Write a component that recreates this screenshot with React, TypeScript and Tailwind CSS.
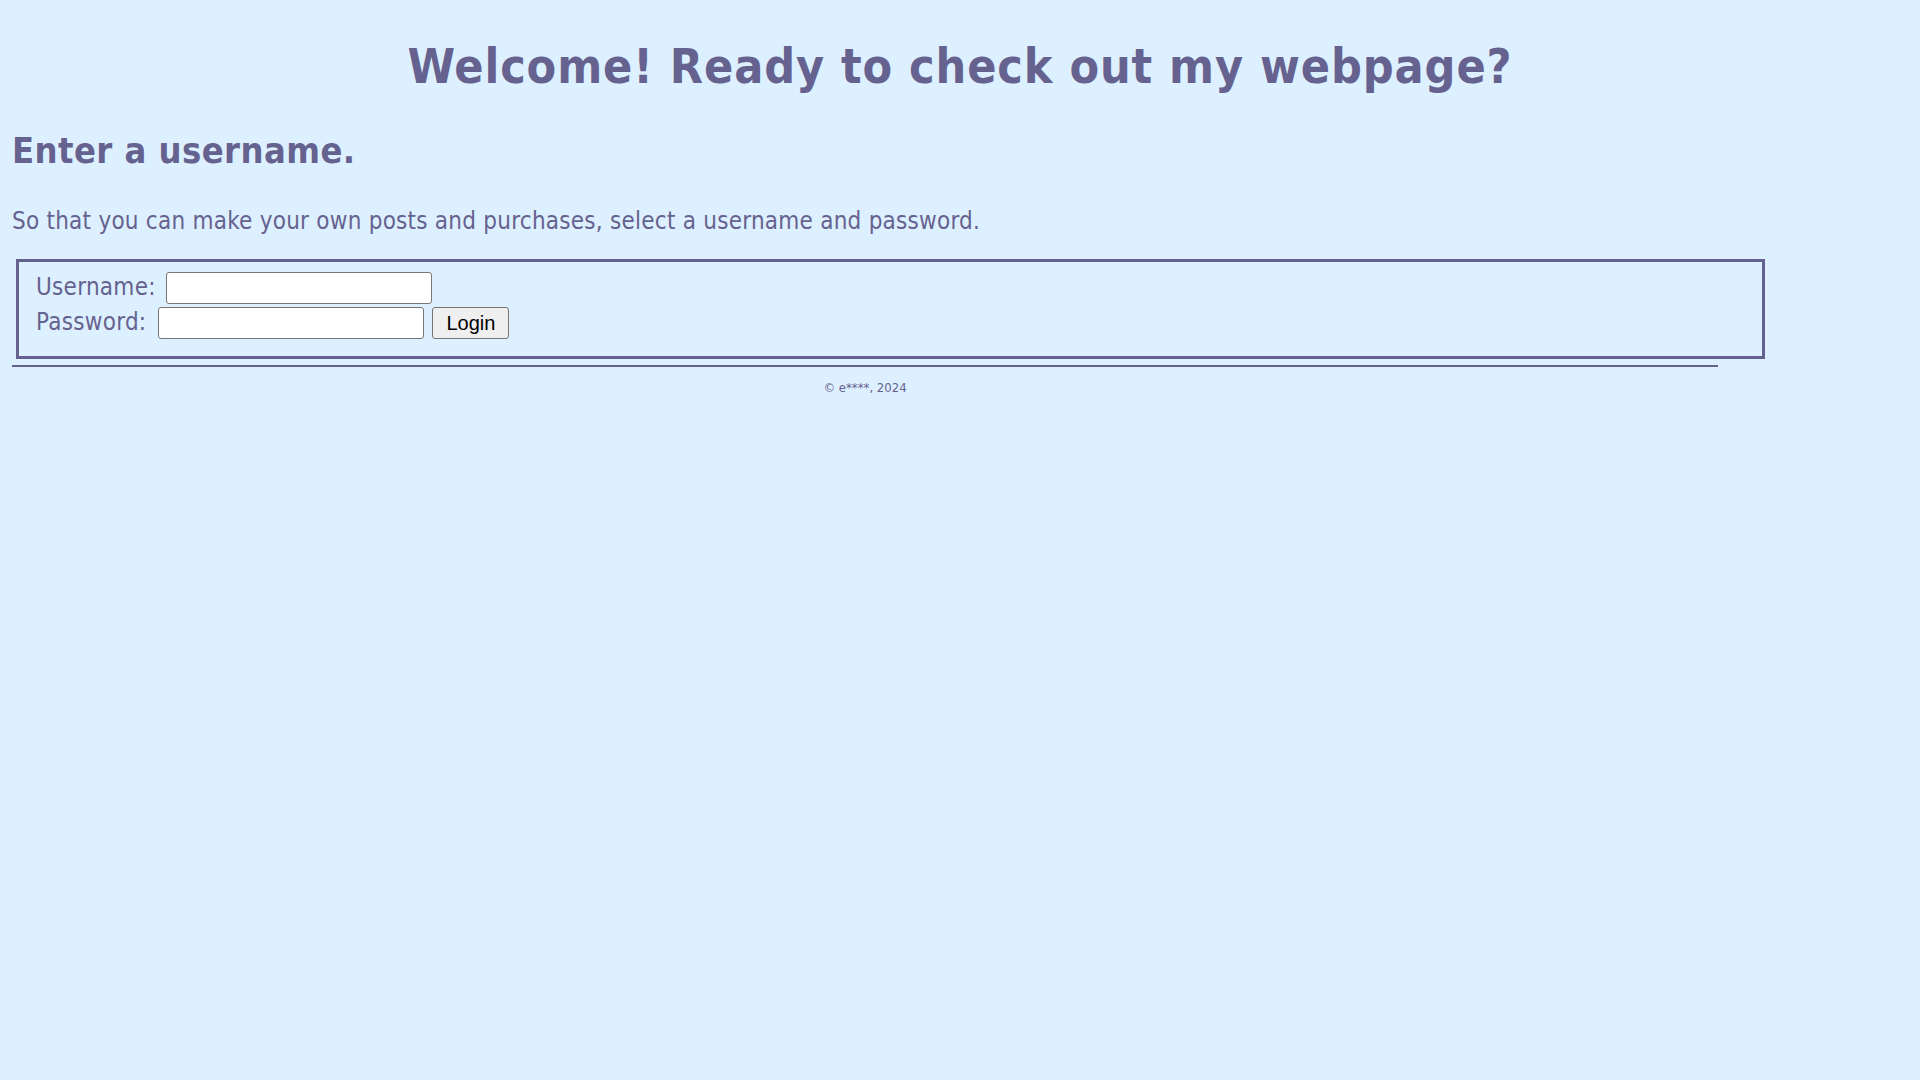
const FONT = "[font-family:'DejaVu_Sans_Condensed','DejaVu_Sans',sans-serif]";

function Field({ label, withButton }: { label: string; withButton?: boolean }) {
  return (
    <div className="flex h-[32px] items-center">
      <span className="pb-[2px] text-[24px] leading-[28px] tracking-[0.27px]">{label}</span>
      <input
        type={withButton ? "password" : "text"}
        className={
          withButton
            ? "ml-[12px] h-[32px] w-[266px] rounded-[3px] border border-[#767676] bg-white px-[3px] outline-none"
            : "ml-[10px] h-[32px] w-[266px] rounded-[3px] border border-[#767676] bg-white px-[3px] outline-none"
        }
      />
      {withButton && (
        <button className="ml-[8px] h-[32px] rounded-[3px] border border-[#767676] bg-[#efefef] px-[13px] font-['Liberation_Sans',Arial,sans-serif] text-[20px] leading-[23px] text-black">
          Login
        </button>
      )}
    </div>
  );
}

export default function App() {
  return (
    <div className={`min-h-screen bg-[#ddf0ff] p-[12px] text-[#66628f] ${FONT}`}>
      <h1 className="mt-[26px] text-center text-[48px] font-bold leading-[56px] tracking-[0.9px]">
        Welcome! Ready to check out my webpage?
      </h1>
      <h2 className="mt-[36px] text-[36px] font-bold leading-[42px] tracking-[0.43px]">
        Enter a username.
      </h2>
      <p className="mt-[35px] text-[24px] leading-[28px] tracking-[0.24px]">
        So that you can make your own posts and purchases, select a username and password.
      </p>

      <form
        className="ml-[4px] mt-[24px] w-[1749px] border-[3px] border-[#66628f] pb-[17px] pl-[17px] pt-[10px]"
        onSubmit={(e) => e.preventDefault()}
      >
        <div className="flex flex-col gap-[3px]">
          <Field label="Username:" />
          <Field label="Password:" withButton />
        </div>
      </form>

      <div className="w-[1706px]">
        <hr className="mt-[6px] border-0 border-t-2 border-[#66628f]" />
        <p className="mt-[13px] text-center text-[13px] leading-[16px]">© e****, 2024</p>
      </div>
    </div>
  );
}
